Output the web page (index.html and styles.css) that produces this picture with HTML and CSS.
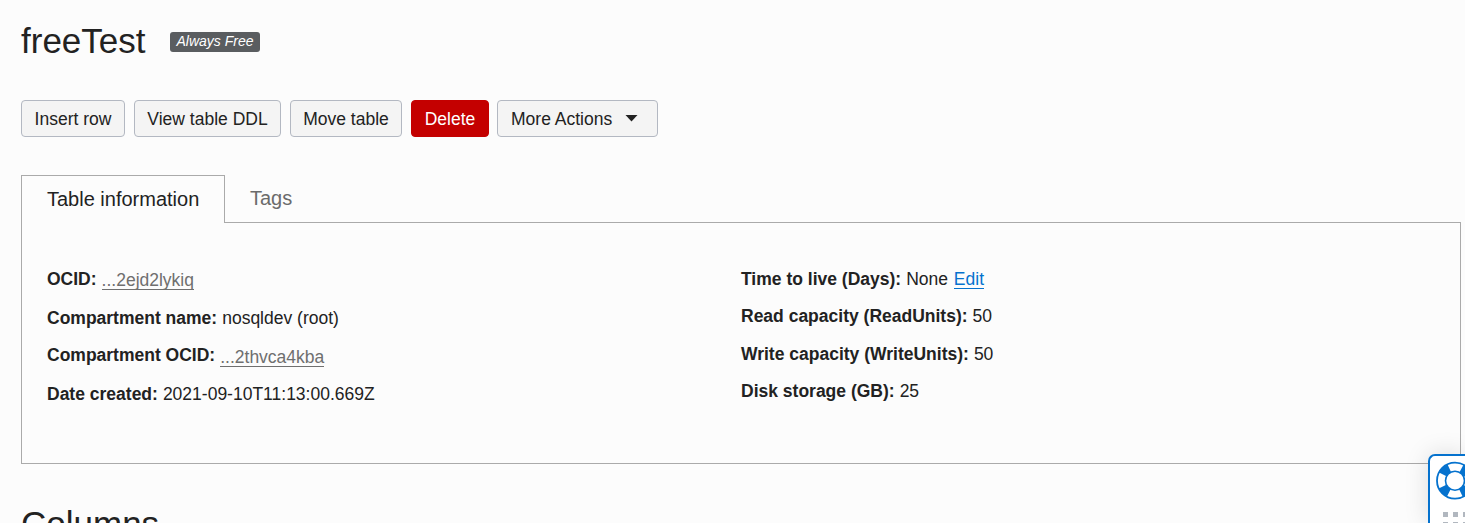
FILE: index.html
```html
<!DOCTYPE html>
<html lang="en">
<head>
<meta charset="utf-8">
<title>freeTest</title>
<link rel="stylesheet" href="styles.css">
</head>
<body>
<main class="page">
  <header class="heading">
    <h1 class="title">freeTest</h1>
    <span class="badge">Always Free</span>
  </header>
  <div class="actions">
    <button class="btn insert">Insert row</button>
    <button class="btn ddl">View table DDL</button>
    <button class="btn move">Move table</button>
    <button class="btn delete">Delete</button>
    <button class="btn more">More Actions
      <svg class="caret" width="13" height="7" viewBox="0 0 13 7"><path d="M0.5 0h12L6.5 6.5z" fill="#222"/></svg>
    </button>
  </div>
  <nav class="tabs">
    <a class="tab active">Table information</a>
    <a class="tab">Tags</a>
  </nav>
  <section class="panel">
    <dl class="col left">
      <div class="row"><dt>OCID:</dt><dd><a class="ocid">...2ejd2lykiq</a></dd></div>
      <div class="row"><dt>Compartment name:</dt><dd>nosqldev (root)</dd></div>
      <div class="row"><dt>Compartment OCID:</dt><dd><a class="ocid low">...2thvca4kba</a></dd></div>
      <div class="row"><dt>Date created:</dt><dd>2021-09-10T11:13:00.669Z</dd></div>
    </dl>
    <dl class="col right">
      <div class="row"><dt>Time to live (Days):</dt><dd>None <a class="edit">Edit</a></dd></div>
      <div class="row"><dt>Read capacity (ReadUnits):</dt><dd>50</dd></div>
      <div class="row"><dt>Write capacity (WriteUnits):</dt><dd>50</dd></div>
      <div class="row"><dt>Disk storage (GB):</dt><dd>25</dd></div>
    </dl>
  </section>
  <h2 class="columns">Columns</h2>
</main>
<aside class="help">
  <svg width="37" height="69" viewBox="0 0 37 69">
    <circle cx="27" cy="26.7" r="13.5" fill="none" stroke="#0572ce" stroke-width="9" stroke-dasharray="8.8 12.406" stroke-dashoffset="-6.2"/>
    <circle cx="27" cy="26.7" r="18" fill="none" stroke="#0572ce" stroke-width="1.8"/>
    <circle cx="27" cy="26.7" r="9.5" fill="#fff" stroke="#0572ce" stroke-width="1.6"/>
    <path d="M15 58h5v5h-5zM25 58h5v5h-5zM35 58h2v5h-2zM15 68h5v1h-5zM25 68h5v1h-5zM35 68h2v1h-2z" fill="#b1b7bf"/>
  </svg>
</aside>
</body>
</html>
```
FILE: styles.css
```css
* { box-sizing: border-box; }
html, body { margin: 0; height: 523px; overflow: hidden; }
body {
  background: #fcfcfc;
  color: #222;
  font: 17.5px/20px "Liberation Sans", Arial, sans-serif;
}
.page { padding: 20px 4px 0 21px; }
.heading { display: flex; align-items: center; height: 42px; }
.title, .columns { margin: 0; font-size: 35px; line-height: 40px; font-weight: 400; }
.title { width: 149px; }
.badge {
  width: 90px; height: 20px; border-radius: 3px; margin-top: 2px;
  background: #5a5d60; color: #fff;
  font-size: 14px; line-height: 19px; font-style: italic; text-align: center;
}
.actions { display: flex; gap: 9px; margin-top: 38px; }
.btn {
  height: 37px; padding: 0;
  border: 1px solid #b3b8c2; border-radius: 4px;
  background: #f4f4f4; color: #222;
  font: inherit; white-space: nowrap;
}
.insert { width: 104px; }
.ddl { width: 147px; }
.move { width: 112px; }
.delete { width: 78px; margin-right: -1px; background: #c40000; border-color: #c40000; color: #fff; }
.more { display: flex; align-items: center; width: 161px; padding-left: 13px; }
.caret { margin-left: 13px; }
.tabs { display: flex; height: 48px; margin-top: 38px; font-size: 20px; line-height: 24px; position: relative; z-index: 1; }
.tab { padding: 11px 25px 0; color: #6b6b6b; }
.active {
  width: 204px; padding: 11px 0 0 25px;
  border: 1px solid #aaa; border-bottom: 0;
  background: #fcfcfc; color: #222;
}
.panel { display: flex; height: 242px; margin-top: -1px; border: 1px solid #aaa; padding: 46px 0 0 25px; }
.col { display: grid; align-content: start; margin: 0; }
.left { width: 694px; grid-template-rows: 39px 37px 39px 20px; }
.right { grid-template-rows: 37px 38px 37px 20px; }
.row { display: flex; gap: 5px; white-space: nowrap; }
dt { font-weight: 700; }
dd { margin: 0; }
.ocid, .edit { display: inline-block; height: 20px; border-bottom: 1px solid currentColor; }
.ocid { color: #6f6f6f; margin-top: 1px; }
.low { margin-top: 2px; }
.edit { color: #0572ce; margin-left: 1px; }
.columns { margin-top: 40px; }
.help {
  position: absolute; left: 1428px; top: 454px; width: 37px; height: 69px;
  border: 2px solid #0572ce; border-right: 0; border-bottom: 0; border-top-left-radius: 7px;
  background: #fff; box-shadow: 0 0 25px rgba(0, 0, 0, .13);
}
.help svg { display: block; margin: -2px 0 0 -2px; }
```
